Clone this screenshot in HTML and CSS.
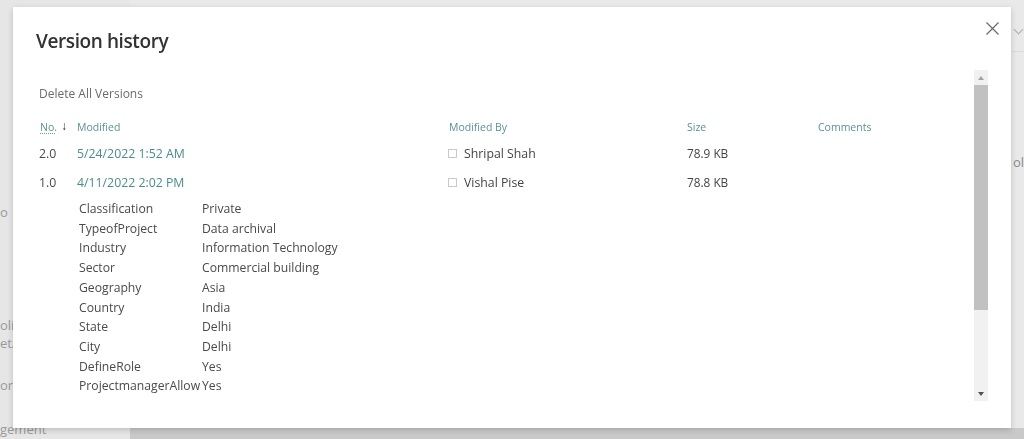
FILE: index.html
```html
<!DOCTYPE html>
<html lang="en">
<head>
<meta charset="utf-8">
<title>Version history</title>
<link rel="stylesheet" href="styles.css">
</head>
<body>
<div class="page">
  <aside class="sidebar">
    <div class="nav-item n1">o</div>
    <div class="nav-item n2">olic</div>
    <div class="nav-item n3">etA</div>
    <div class="nav-item n4">orl</div>
    <div class="nav-item n5">gement</div>
  </aside>
  <main class="main">
    <div class="topbar"><span class="chev"></span></div>
    <div class="main-body"><span class="frag">ol</span></div>
    <div class="bottombar"></div>
  </main>
</div>

<div class="dialog" role="dialog" aria-label="Version history">
  <header class="dialog-head">
    <h1 class="title">Version history</h1>
    <button class="close" aria-label="Close">
      <svg width="13" height="13" viewBox="0 0 13 13"><path d="M0.5 0.5 L12.5 12.5 M12.5 0.5 L0.5 12.5" stroke="#6a6a6a" stroke-width="1.2" fill="none"/></svg>
    </button>
  </header>
  <div class="scroll-wrap">
    <div class="scroll-content">
      <div class="delete">Delete All Versions</div>
      <div class="vtable">
        <div class="th th-no"><span class="no">No.</span><span class="arrow">&#x2193;</span></div>
        <div class="th th-mod">Modified</div>
        <div class="th">Modified By</div>
        <div class="th">Size</div>
        <div class="th">Comments</div>

        <div class="td num">2.0</div>
        <div class="td date">5/24/2022 1:52 AM</div>
        <div class="td person"><span class="chk"></span>Shripal Shah</div>
        <div class="td size">78.9 KB</div>
        <div class="td"></div>

        <div class="td num">1.0</div>
        <div class="td date">4/11/2022 2:02 PM</div>
        <div class="td person"><span class="chk"></span>Vishal Pise</div>
        <div class="td size">78.8 KB</div>
        <div class="td"></div>
      </div>
      <dl class="props">
        <dt>Classification</dt><dd>Private</dd>
        <dt>TypeofProject</dt><dd>Data archival</dd>
        <dt>Industry</dt><dd>Information Technology</dd>
        <dt>Sector</dt><dd>Commercial building</dd>
        <dt>Geography</dt><dd>Asia</dd>
        <dt>Country</dt><dd>India</dd>
        <dt>State</dt><dd>Delhi</dd>
        <dt>City</dt><dd>Delhi</dd>
        <dt>DefineRole</dt><dd>Yes</dd>
        <dt>ProjectmanagerAllow</dt><dd>Yes</dd>
        <dt>ProjectDetails</dt><dd>Archival of the legal documents</dd>
      </dl>
    </div>
    <div class="scrollbar">
      <div class="sb-btn"><span class="tri up"></span></div>
      <div class="sb-thumb"></div>
      <div class="sb-track"></div>
      <div class="sb-btn"><span class="tri down"></span></div>
    </div>
  </div>
</div>
</body>
</html>
```

FILE: styles.css
```css
* { box-sizing: border-box; }
html, body { margin: 0; padding: 0; }
body {
  width: 1024px;
  height: 439px;
  overflow: hidden;
  font-family: "Open Sans", "Noto Sans", "Liberation Sans", sans-serif;
  background: #e8e8e8;
}

/* background page (dimmed) */
.page {
  display: flex;
  height: 439px;
}
.sidebar {
  width: 130px;
  background: #e6e6e6;
  display: flex;
  flex-direction: column;
  padding-top: 203px;
  color: #9a9a9a;
  font-size: 13px;
}
.nav-item { line-height: 18px; white-space: nowrap; }
.n2 { margin-top: 95px; }
.n3 { margin-top: 0; }
.n4 { margin-top: 24px; }
.n5 { margin-top: 26px; }
.main {
  flex: 1;
  display: flex;
  flex-direction: column;
  background: #e9e9e9;
}
.topbar {
  height: 52px;
  border-bottom: 1px solid #dcdcdc;
  display: flex;
  justify-content: flex-end;
  padding: 26px 2px 0 0;
}
.chev {
  width: 7px; height: 7px;
  border-right: 1px solid #b0b0b0;
  border-bottom: 1px solid #b0b0b0;
  transform: rotate(45deg);
}
.main-body {
  flex: 1;
  display: flex;
  justify-content: flex-end;
  padding-top: 101px;
  color: #8a8a8a;
  font-size: 13px;
}
.frag { margin-right: 0; line-height: 18px; }
.bottombar {
  height: 11px;
  background: #c9c9c9;
}

/* dialog */
.dialog {
  position: fixed;
  left: 13px;
  top: 7px;
  width: 998px;
  height: 421px;
  background: #fff;
  box-shadow: 0 2px 6px rgba(0,0,0,0.18);
  display: flex;
  flex-direction: column;
  padding: 0 23px 27px 23px;
}
.dialog-head {
  height: 63px;
  display: flex;
  justify-content: space-between;
  align-items: flex-start;
  padding-top: 20px;
}
.title {
  margin: 0;
  font-size: 19px;
  font-weight: 600;
  line-height: 28px;
  color: #323232;
  letter-spacing: -0.4px;
}
.close {
  border: 0;
  background: transparent;
  padding: 0;
  width: 13px;
  height: 13px;
  margin: -5px -11px 0 0;
  display: flex;
}

.scroll-wrap {
  flex: 1;
  display: flex;
  min-height: 0;
}
.scroll-content {
  flex: 1;
  overflow: hidden;
  padding: 16px 0 0 3px;
  margin-bottom: 2px;
}
.delete {
  font-size: 12px;
  line-height: 16px;
  color: #6b6b6b;
  margin-bottom: 17px;
}

.vtable {
  display: grid;
  grid-template-columns: 37px 373px 238px 131px 1fr;
  grid-template-rows: 16px 4px 29px 29px;
}
.vtable > .th:nth-child(-n+5) { grid-row: 1; }
.th {
  font-size: 10.5px;
  line-height: 16px;
  color: #5a9294;
  white-space: nowrap;
}
.th-mod { padding-left: 1px; }
.th-no { display: flex; align-items: center; }
.no {
  text-decoration: underline dotted #6a9c9e;
  text-underline-offset: 2px;
  padding-left: 1px;
}
.arrow {
  color: #2a2a2a;
  font-size: 12px;
  margin-left: 4px;
  font-weight: 700;
  line-height: 14px;
  margin-top: -3px;
}
.vtable > .td:nth-child(n+6):nth-child(-n+10) { grid-row: 3; }
.vtable > .td:nth-child(n+11) { grid-row: 4; }
.td {
  font-size: 12.3px;
  line-height: 29px;
  color: #444;
  white-space: nowrap;
}
.num { color: #4a4a4a; }
.date { color: #4b8c8e; padding-left: 1px; }
.person { display: flex; align-items: center; margin-left: -1px; }
.chk {
  width: 9px; height: 9px;
  border: 1px solid #c9c9c9;
  margin-right: 7px;
}
.size { font-size: 11.8px; color: #444; }

.props {
  margin: 2px 0 0 40px;
  display: grid;
  grid-template-columns: 123px 1fr;
  font-size: 12.2px;
  line-height: 19.7px;
  color: #4a4a4a;
}
.props dt, .props dd { margin: 0; white-space: nowrap; }

.scrollbar {
  width: 14px;
  display: flex;
  flex-direction: column;
  background: #f1f1f1;
}
.sb-btn {
  height: 15px;
  display: flex;
  align-items: center;
  justify-content: center;
}
.sb-thumb { height: 225px; background: #c1c1c1; }
.sb-track { flex: 1; }
.tri { width: 0; height: 0; border-left: 3.5px solid transparent; border-right: 3.5px solid transparent; }
.tri.up { border-bottom: 4px solid #a3a3a3; }
.tri.down { border-top: 4px solid #505050; }
```
